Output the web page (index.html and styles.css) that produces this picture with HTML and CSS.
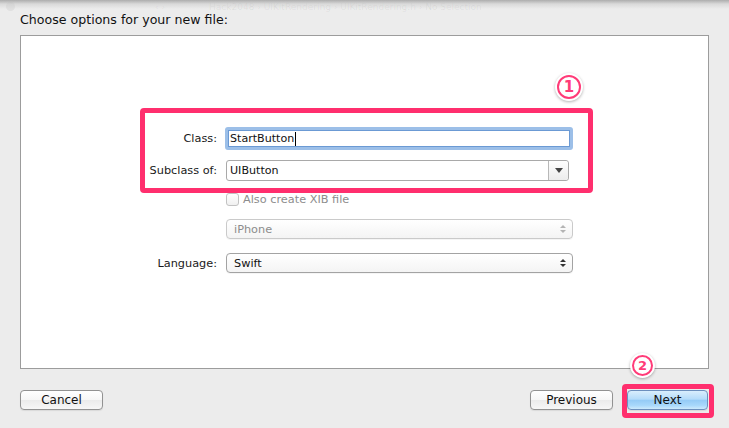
FILE: index.html
```html
<!DOCTYPE html>
<html>
<head>
<meta charset="utf-8">
<link rel="stylesheet" href="styles.css">
</head>
<body>
<div class="screen">
  <div class="toolbar-ghost">
    <span class="ghost-dot"></span>
    <span class="ghost-nav">‹ ›</span>
    <span class="ghost-crumb">Hack2048 › UIKitRendering › UIKitRendering.h › No Selection</span>
  </div>
  <div class="shadow-top"></div>
  <div class="sheet">
    <div class="title">Choose options for your new file:</div>
    <div class="panel">
      <div class="annot-box"></div>
      <div class="badge badge-one">1</div>
      <div class="form">
        <div class="row row-class">
          <label class="label">Class:</label>
          <div class="field"><span class="field-text">StartButton</span><span class="caret"></span></div>
        </div>
        <div class="row row-sub">
          <label class="label">Subclass of:</label>
          <div class="combo">
            <span class="combo-text">UIButton</span>
            <span class="combo-arrow"><span class="tri-down"></span></span>
          </div>
        </div>
        <div class="row row-check">
          <span></span>
          <div class="check-wrap"><span class="checkbox"></span><span class="check-text">Also create XIB file</span></div>
        </div>
        <div class="row row-device">
          <span></span>
          <div class="popup disabled"><span class="popup-text">iPhone</span><span class="updown"><span class="up"></span><span class="down"></span></span></div>
        </div>
        <div class="row row-lang">
          <label class="label">Language:</label>
          <div class="popup"><span class="popup-text">Swift</span><span class="updown"><span class="up"></span><span class="down"></span></span></div>
        </div>
      </div>
    </div>
    <div class="footer">
      <button class="btn btn-cancel">Cancel</button>
      <div class="spacer"></div>
      <button class="btn btn-prev">Previous</button>
      <div class="next-wrap">
        <div class="badge badge-two">2</div>
        <button class="btn btn-next">Next</button>
      </div>
    </div>
  </div>
</div>
</body>
</html>
```

FILE: styles.css
```css
html, body {
  margin: 0;
  padding: 0;
}
body {
  width: 729px;
  height: 428px;
  overflow: hidden;
  background: #ececec;
  font-family: "DejaVu Sans", "Liberation Sans", sans-serif;
  color: #1c1c1c;
}
.screen {
  position: relative;
  width: 729px;
  height: 428px;
  background: #ececec;
}
.toolbar-ghost {
  position: absolute;
  left: 0;
  top: 0;
  width: 729px;
  height: 13px;
  display: flex;
  align-items: center;
  font-size: 9px;
  line-height: 10px;
  color: rgba(0, 0, 0, 0.07);
  white-space: nowrap;
}
.ghost-dot {
  width: 9px;
  height: 9px;
  border-radius: 50%;
  background: rgba(0, 0, 0, 0.05);
  margin-left: 6px;
}
.ghost-nav {
  margin-left: 140px;
}
.ghost-crumb {
  margin-left: 44px;
}
.shadow-top {
  position: absolute;
  left: 0;
  top: 0;
  width: 729px;
  height: 9px;
  background: linear-gradient(#adadad, rgba(200, 200, 200, 0.5) 45%, rgba(236, 236, 236, 0));
}
.sheet {
  position: relative;
  display: flex;
  flex-direction: column;
  height: 428px;
}
.title {
  height: 35px;
  box-sizing: border-box;
  padding: 13px 0 0 20px;
  font-size: 12.6px;
  line-height: 14px;
  color: #111;
}
.panel {
  position: relative;
  margin: 0 20px;
  height: 334px;
  box-sizing: border-box;
  border: 1px solid #9c9c9c;
  background: #fff;
}
.form {
  display: flex;
  flex-direction: column;
  padding-top: 91px;
}
.row {
  display: grid;
  grid-template-columns: 196px 348px;
  column-gap: 8px;
  align-items: center;
}
.row-class { height: 23px; }
.row-sub { height: 21px; margin-top: 10px; }
.row-check { height: 15px; margin-top: 11px; }
.row-device { height: 20px; margin-top: 12px; }
.row-lang { height: 20px; margin-top: 14px; }
.label {
  text-align: right;
  font-size: 11.3px;
  color: #1a1a1a;
}
.field {
  box-sizing: border-box;
  height: 23px;
  width: 348px;
  border: 3px solid #9cbfe8;
  border-radius: 3px;
  box-shadow: inset 0 0 0 1px #6b9ad4;
  display: flex;
  align-items: center;
  padding-left: 2px;
  font-size: 11.1px;
  color: #111;
}
.caret {
  width: 1px;
  height: 14px;
  background: #000;
  margin-left: 1px;
}
.combo {
  box-sizing: border-box;
  width: 343px;
  height: 21px;
  margin-left: 1px;
  border: 1px solid #a9a9a9;
  border-radius: 3px;
  background: #fff;
  display: flex;
  align-items: center;
  font-size: 11.1px;
  color: #111;
}
.combo-text {
  flex: 1;
  padding-left: 3px;
}
.combo-arrow {
  width: 19px;
  height: 100%;
  border-left: 1px solid #b8b8b8;
  background: linear-gradient(#fefefe, #ececec);
  border-radius: 0 3px 3px 0;
  display: flex;
  align-items: center;
  justify-content: center;
}
.tri-down {
  width: 0;
  height: 0;
  border-left: 4px solid transparent;
  border-right: 4px solid transparent;
  border-top: 5px solid #444;
}
.check-wrap {
  display: flex;
  align-items: center;
  margin-left: 1px;
}
.checkbox {
  box-sizing: border-box;
  width: 13px;
  height: 13px;
  border: 1px solid #c2c2c2;
  border-radius: 3px;
  background: linear-gradient(#ffffff, #f0f0f0);
}
.check-text {
  margin-left: 4px;
  font-size: 11.3px;
  color: #8d8d8d;
}
.popup {
  box-sizing: border-box;
  width: 347px;
  height: 20px;
  margin-left: 1px;
  border: 1px solid #a3a3a3;
  border-radius: 4px;
  background: linear-gradient(#ffffff, #f4f4f4);
  display: flex;
  align-items: center;
  font-size: 11.3px;
  color: #111;
  box-shadow: 0 1px 0 rgba(0, 0, 0, 0.04);
}
.popup.disabled {
  border-color: #cacaca;
  color: #8c8c8c;
}
.popup-text {
  flex: 1;
  padding-left: 7px;
}
.updown {
  display: flex;
  flex-direction: column;
  align-items: center;
  gap: 2px;
  margin-right: 6px;
}
.up, .down {
  width: 0;
  height: 0;
  border-left: 3px solid transparent;
  border-right: 3px solid transparent;
}
.up { border-bottom: 3px solid #333; }
.down { border-top: 3px solid #333; }
.popup.disabled .up { border-bottom-color: #b4b4b4; }
.popup.disabled .down { border-top-color: #b4b4b4; }

.annot-box {
  position: absolute;
  left: 119px;
  top: 72px;
  width: 453px;
  height: 85px;
  box-sizing: border-box;
  border: 5px solid #ff2f6e;
  border-radius: 4px;
  z-index: 2;
  pointer-events: none;
}
.badge {
  position: absolute;
  box-sizing: border-box;
  border-radius: 50%;
  background: #fff;
  border: 2px solid #ff3b78;
  color: #ff3b78;
  font-family: "DejaVu Sans", sans-serif;
  font-weight: bold;
  display: flex;
  align-items: center;
  justify-content: center;
  box-shadow: 0 0 0 2px #fff, 0 1px 3px 2px rgba(0, 0, 0, 0.3);
  z-index: 3;
}
.badge-one {
  left: 536px;
  top: 39px;
  width: 24px;
  height: 24px;
  font-size: 15px;
}
.badge-two {
  left: 5px;
  top: -35px;
  width: 21px;
  height: 21px;
  font-size: 13px;
}
.footer {
  display: flex;
  align-items: flex-start;
  padding: 21px 21px 0 20px;
}
.spacer {
  flex: 1;
}
.btn {
  box-sizing: border-box;
  height: 20px;
  border: 1px solid #929292;
  border-radius: 4px;
  background: linear-gradient(#ffffff, #f6f6f6 50%, #ebebeb 51%, #f7f7f7);
  font-family: "DejaVu Sans", sans-serif;
  font-size: 12px;
  color: #111;
  padding: 0;
  line-height: 18px;
  box-shadow: 0 1px 1px rgba(0, 0, 0, 0.08);
}
.btn-cancel { width: 83px; }
.btn-prev { width: 83px; }
.next-wrap {
  position: relative;
  margin-left: 14px;
}
.next-wrap::after {
  content: "";
  position: absolute;
  left: -5px;
  top: -6px;
  right: -6px;
  bottom: -8px;
  border: 5px solid #ff2f6e;
  border-radius: 4px;
  pointer-events: none;
}
.btn-next {
  display: block;
  width: 81px;
  border-color: #6c8fbd;
  background: linear-gradient(#d9eefd, #b5dcfa 45%, #95cbf6 52%, #a8d8fb 80%, #cdeafd);
}
```
